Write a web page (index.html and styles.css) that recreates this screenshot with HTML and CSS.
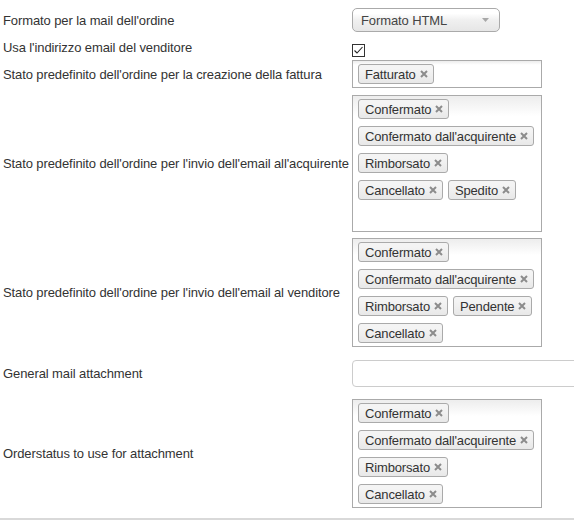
FILE: index.html
```html
<!DOCTYPE html>
<html lang="it">
<head>
  <meta charset="UTF-8" />
  <title>Configurazione email ordine</title>
  <link rel="stylesheet" href="styles.css">
</head>
<body>
  <div class="form">

    <div class="row">
      <div class="lbl">Formato per la mail dell'ordine</div>
      <div class="field">
        <div class="select">
          <span>Formato HTML</span>
          <svg class="arrow" width="7" height="4" viewBox="0 0 7 4"><path d="M0 0 L7 0 L3.5 4 Z" fill="#a8a8a8"/></svg>
        </div>
      </div>
    </div>

    <div class="row row-check">
      <div class="lbl">Usa l'indirizzo email del venditore</div>
      <div class="field">
        <svg class="check" width="13" height="13" viewBox="0 0 13 13">
          <rect x="0.5" y="0.5" width="12" height="12" fill="#fff" stroke="#333"/>
          <path d="M2.5 6.5 L5 9 L10.5 3" fill="none" stroke="#222" stroke-width="1.1"/>
        </svg>
      </div>
    </div>

    <div class="row">
      <div class="lbl">Stato predefinito dell'ordine per la creazione della fattura</div>
      <div class="field">
        <div class="tags" id="fattura"></div>
      </div>
    </div>

    <div class="row">
      <div class="lbl">Stato predefinito dell'ordine per l'invio dell'email all'acquirente</div>
      <div class="field">
        <div class="tags tags-tall" id="acquirente"></div>
      </div>
    </div>

    <div class="row">
      <div class="lbl">Stato predefinito dell'ordine per l'invio dell'email al venditore</div>
      <div class="field">
        <div class="tags" id="venditore"></div>
      </div>
    </div>

    <div class="row row-input">
      <div class="lbl">General mail attachment</div>
      <div class="field">
        <input type="text" class="text">
      </div>
    </div>

    <div class="row">
      <div class="lbl">Orderstatus to use for attachment</div>
      <div class="field">
        <div class="tags" id="allegato"></div>
      </div>
    </div>

  </div>
  <div class="sep"></div>

  <script>
    const stati = {
      fattura: ['Fatturato'],
      acquirente: ['Confermato', "Confermato dall'acquirente", 'Rimborsato', 'Cancellato', 'Spedito'],
      venditore: ['Confermato', "Confermato dall'acquirente", 'Rimborsato', 'Pendente', 'Cancellato'],
      allegato: ['Confermato', "Confermato dall'acquirente", 'Rimborsato', 'Cancellato']
    };

    const chiudi = '<svg width="8" height="8" viewBox="0 0 8 8"><path d="M1 1 L7 7 M7 1 L1 7" stroke="#8c8c8c" stroke-width="2"/></svg>';

    for (const id in stati) {
      const box = document.getElementById(id);
      stati[id].forEach(nome => {
        const tag = document.createElement('span');
        tag.className = 'tag';
        tag.innerHTML = `<span>${nome}</span>${chiudi}`;
        box.appendChild(tag);
      });
    }
  </script>
</body>
</html>
```

FILE: styles.css
```css
* { box-sizing: border-box; }
html, body {
  margin: 0;
  padding: 0;
  overflow: hidden;
}
body {
  font-family: 'Liberation Sans', Arial, sans-serif;
  font-size: 13px;
  letter-spacing: -0.1px;
  color: #333;
  background: #fff;
}
.form {
  padding-top: 5px;
}
.row {
  display: grid;
  grid-template-columns: 352px 1fr;
  align-items: center;
  padding: 3px 0;
}
.row-check {
  padding-bottom: 0;
}
.row-input {
  padding: 10px 0 9px;
}
.lbl {
  padding-left: 3px;
  white-space: nowrap;
}
.field {
  min-width: 0;
}
.select {
  width: 148px;
  height: 24px;
  border: 1px solid #aaa;
  border-radius: 5px;
  background: linear-gradient(#fff 20%, #f0f0f0 50%, #e6e6e6);
  display: flex;
  align-items: center;
  justify-content: space-between;
  padding: 0 10px 0 8px;
  color: #444;
}
.check {
  display: block;
  margin-top: 6px;
}
.tags {
  width: 190px;
  border: 1px solid #aaa;
  background: linear-gradient(#eee 1%, #fff 15%);
  padding: 3px 4px 3px 5px;
  display: flex;
  flex-wrap: wrap;
  align-content: flex-start;
  gap: 7px 5px;
}
.tags-tall {
  height: 137px;
  margin-top: 1px;
}
.tag {
  display: flex;
  align-items: center;
  gap: 4px;
  height: 20px;
  padding: 0 5px 0 6px;
  border: 1px solid #aaa;
  border-radius: 3px;
  background: linear-gradient(#f4f4f4 20%, #f0f0f0 50%, #e8e8e8);
  white-space: nowrap;
  letter-spacing: -0.15px;
  color: #333;
}
.tag svg {
  flex: none;
}
.text {
  display: block;
  width: 240px;
  height: 27px;
  border: 1px solid #ccc;
  border-radius: 4px;
  margin: 0;
  font: inherit;
}
.sep {
  margin-top: 7px;
  border-top: 2px solid #d9d9d9;
}
```
